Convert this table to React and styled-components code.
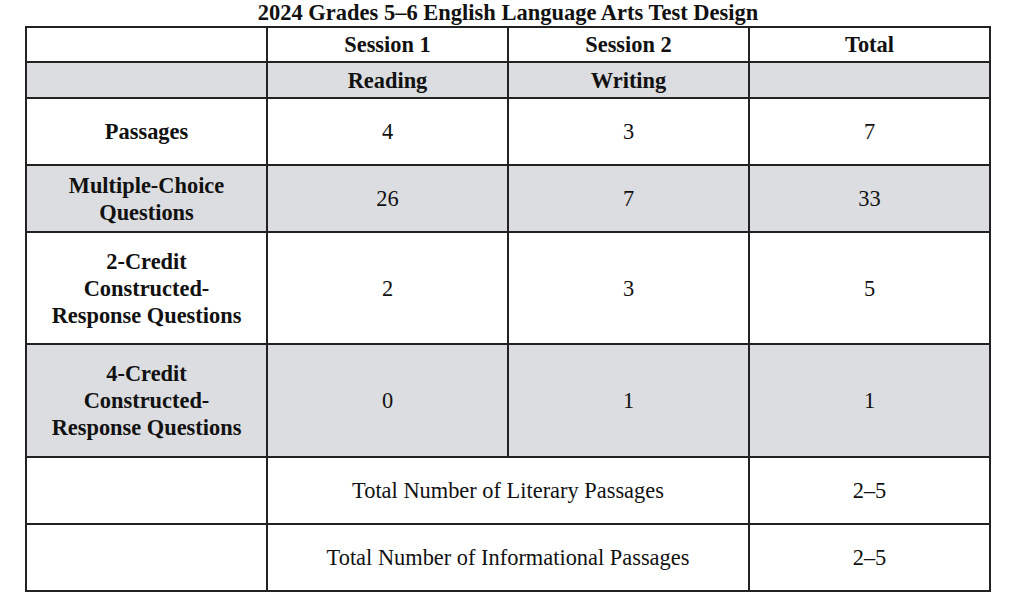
import React from "react";
import styled, { createGlobalStyle } from "styled-components";

const Global = createGlobalStyle`
  html, body { margin: 0; padding: 0; background: #ffffff; }
  body { font-family: "Liberation Serif", "Times New Roman", serif; color: #111; }
`;

const Page = styled.div`
  width: 1014px;
  height: 614px;
  padding-left: 25px;
  box-sizing: border-box;
  overflow: hidden;
`;

const Figure = styled.div`
  width: 966px;
  display: flex;
  flex-direction: column;
`;

const Title = styled.h1`
  margin: 0;
  font-size: 22.5px;
  line-height: 26px;
  font-weight: 700;
  text-align: center;
  color: #111;
`;

const Table = styled.table`
  width: 966px;
  border-collapse: collapse;
  table-layout: fixed;
  border: 2px solid #222;
`;

const Row = styled.tr`
  height: ${(p) => p.$h}px;
  background: ${(p) => (p.$shade ? "#dcdde0" : "#ffffff")};
`;

const Cell = styled.td`
  border: 2px solid #222;
  padding: 0 10px;
  text-align: center;
  vertical-align: middle;
  font-size: 22.4px;
  line-height: 27px;
  font-weight: ${(p) => (p.$bold ? 700 : 400)};
  color: #111;
`;

const rows = [
  { label: ["Passages"], vals: ["4", "3", "7"], h: 67 },
  { label: ["Multiple-Choice", "Questions"], vals: ["26", "7", "33"], h: 67, shade: true },
  { label: ["2-Credit", "Constructed-", "Response Questions"], vals: ["2", "3", "5"], h: 112 },
  { label: ["4-Credit", "Constructed-", "Response Questions"], vals: ["0", "1", "1"], h: 113, shade: true },
];

const Lines = ({ lines }) =>
  lines.map((l, i) => (
    <React.Fragment key={i}>
      {i > 0 && <br />}
      {l}
    </React.Fragment>
  ));

export default function App() {
  return (
    <Page>
      <Global />
      <Figure>
        <Title>2024 Grades 5–6 English Language Arts Test Design</Title>
        <Table>
          <colgroup>
            <col style={{ width: "25%" }} />
            <col style={{ width: "25%" }} />
            <col style={{ width: "25%" }} />
            <col style={{ width: "25%" }} />
          </colgroup>
          <tbody>
            <Row $h={35}>
              <Cell />
              <Cell $bold>Session 1</Cell>
              <Cell $bold>Session 2</Cell>
              <Cell $bold>Total</Cell>
            </Row>
            <Row $h={36} $shade>
              <Cell />
              <Cell $bold>Reading</Cell>
              <Cell $bold>Writing</Cell>
              <Cell />
            </Row>
            {rows.map((r, i) => (
              <Row key={i} $h={r.h} $shade={r.shade}>
                <Cell $bold>
                  <Lines lines={r.label} />
                </Cell>
                {r.vals.map((v, j) => (
                  <Cell key={j}>{v}</Cell>
                ))}
              </Row>
            ))}
            <Row $h={67}>
              <Cell />
              <Cell colSpan={2}>Total Number of Literary Passages</Cell>
              <Cell>2–5</Cell>
            </Row>
            <Row $h={67}>
              <Cell />
              <Cell colSpan={2}>Total Number of Informational Passages</Cell>
              <Cell>2–5</Cell>
            </Row>
          </tbody>
        </Table>
      </Figure>
    </Page>
  );
}
